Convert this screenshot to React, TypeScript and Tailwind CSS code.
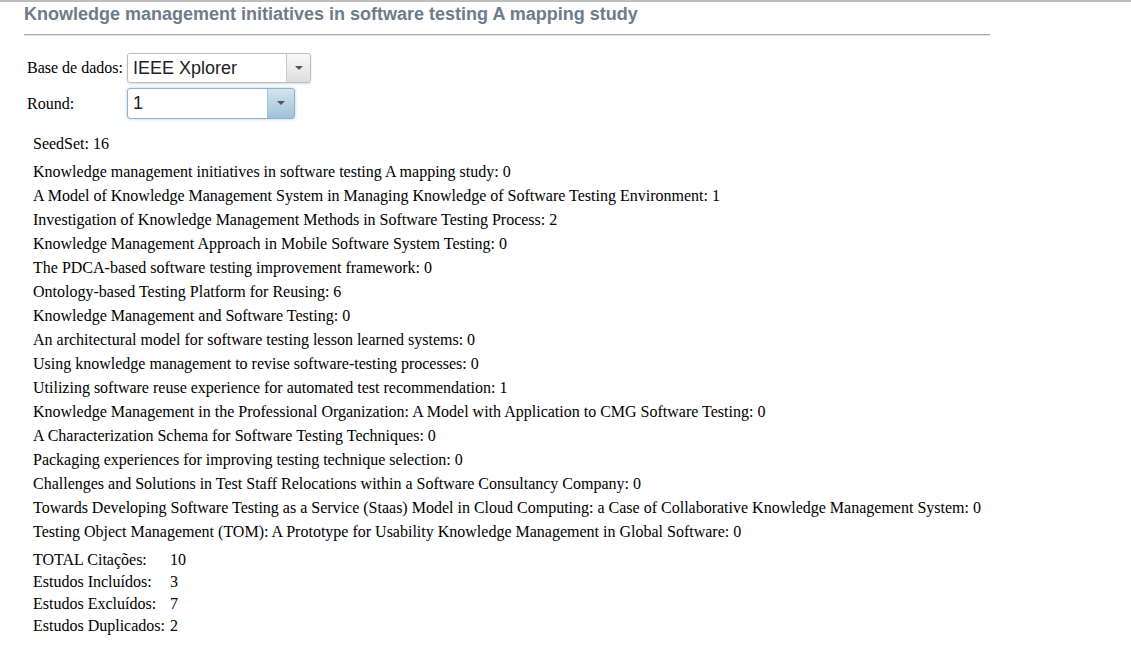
import React from "react";

const items: [string, number][] = [
  ["Knowledge management initiatives in software testing A mapping study", 0],
  ["A Model of Knowledge Management System in Managing Knowledge of Software Testing Environment", 1],
  ["Investigation of Knowledge Management Methods in Software Testing Process", 2],
  ["Knowledge Management Approach in Mobile Software System Testing", 0],
  ["The PDCA-based software testing improvement framework", 0],
  ["Ontology-based Testing Platform for Reusing", 6],
  ["Knowledge Management and Software Testing", 0],
  ["An architectural model for software testing lesson learned systems", 0],
  ["Using knowledge management to revise software-testing processes", 0],
  ["Utilizing software reuse experience for automated test recommendation", 1],
  ["Knowledge Management in the Professional Organization: A Model with Application to CMG Software Testing", 0],
  ["A Characterization Schema for Software Testing Techniques", 0],
  ["Packaging experiences for improving testing technique selection", 0],
  ["Challenges and Solutions in Test Staff Relocations within a Software Consultancy Company", 0],
  ["Towards Developing Software Testing as a Service (Staas) Model in Cloud Computing: a Case of Collaborative Knowledge Management System", 0],
  ["Testing Object Management (TOM): A Prototype for Usability Knowledge Management in Global Software", 0],
];

function Caret() {
  return (
    <svg width="8" height="5" viewBox="0 0 8 5">
      <path d="M0 0 L8 0 L4 4 Z" fill="#555" />
    </svg>
  );
}

export default function App() {
  return (
    <div className="w-[1131px] h-[645px] bg-white border-t-2 border-[#bdbdbd] overflow-hidden text-black" style={{ fontFamily: '"Liberation Serif", serif' }}>
      <div className="pl-6 w-[990px]">
        <h1 className="pt-[1px] text-[18px] font-bold text-[#6e7b8c] leading-[22px] h-[32px]" style={{ fontFamily: '"Liberation Sans", Arial, sans-serif' }}>
          Knowledge management initiatives in software testing A mapping study
        </h1>
        <div className="h-[2px] bg-[#a9a9a9] border-b border-[#e6e6e6]" />
      </div>
      <div className="pl-[27px] pt-[17px] text-[16px]">
        <div className="flex items-center h-[30px]">
          <span className="w-[100px]">Base de dados:</span>
          <div className="flex h-[30px] w-[184px] rounded-[3px] border border-[#bdbdbd] bg-gradient-to-b from-[#fafafa] to-[#dedede] shadow-[0_1px_2px_rgba(0,0,0,0.15)]">
            <div className="flex-1 bg-white rounded-l-[3px] border-r border-[#c8c8c8] flex items-center pl-[5px] text-[18px] text-[#222]" style={{ fontFamily: '"Liberation Sans", Arial, sans-serif' }}>
              IEEE Xplorer
            </div>
            <div className="w-[23px] flex items-center justify-center"><Caret /></div>
          </div>
        </div>
        <div className="flex items-center h-[31px] mt-[5px]">
          <span className="w-[100px]">Round:</span>
          <div className="flex h-[31px] w-[168px] rounded-[3px] border border-[#8fb4cc] bg-gradient-to-b from-[#d2e4f0] to-[#9fc2d8] shadow-[0_0_3px_rgba(100,150,190,0.5)]">
            <div className="flex-1 bg-white rounded-l-[3px] border-r border-[#a6c1d3] flex items-center pl-[5px] text-[18px] text-[#222]" style={{ fontFamily: '"Liberation Sans", Arial, sans-serif' }}>
              1
            </div>
            <div className="w-[26px] flex items-center justify-center"><Caret /></div>
          </div>
        </div>
      </div>
      <div className="pl-[33px] pt-[13px] text-[16px] leading-[24px]">
        <div className="mb-[4px]">SeedSet: 16</div>
        {items.map(([t, n], i) => (
          <div key={i}>{t}: {n}</div>
        ))}
        <div className="mt-[5px] leading-[22px]">
          {[
            ["TOTAL Citações:", 10],
            ["Estudos Incluídos:", 3],
            ["Estudos Excluídos:", 7],
            ["Estudos Duplicados:", 2],
          ].map(([l, v], i) => (
            <div key={i} className="flex">
              <span className="w-[137px] whitespace-nowrap">{l}</span>
              <span>{v}</span>
            </div>
          ))}
        </div>
      </div>
    </div>
  );
}
